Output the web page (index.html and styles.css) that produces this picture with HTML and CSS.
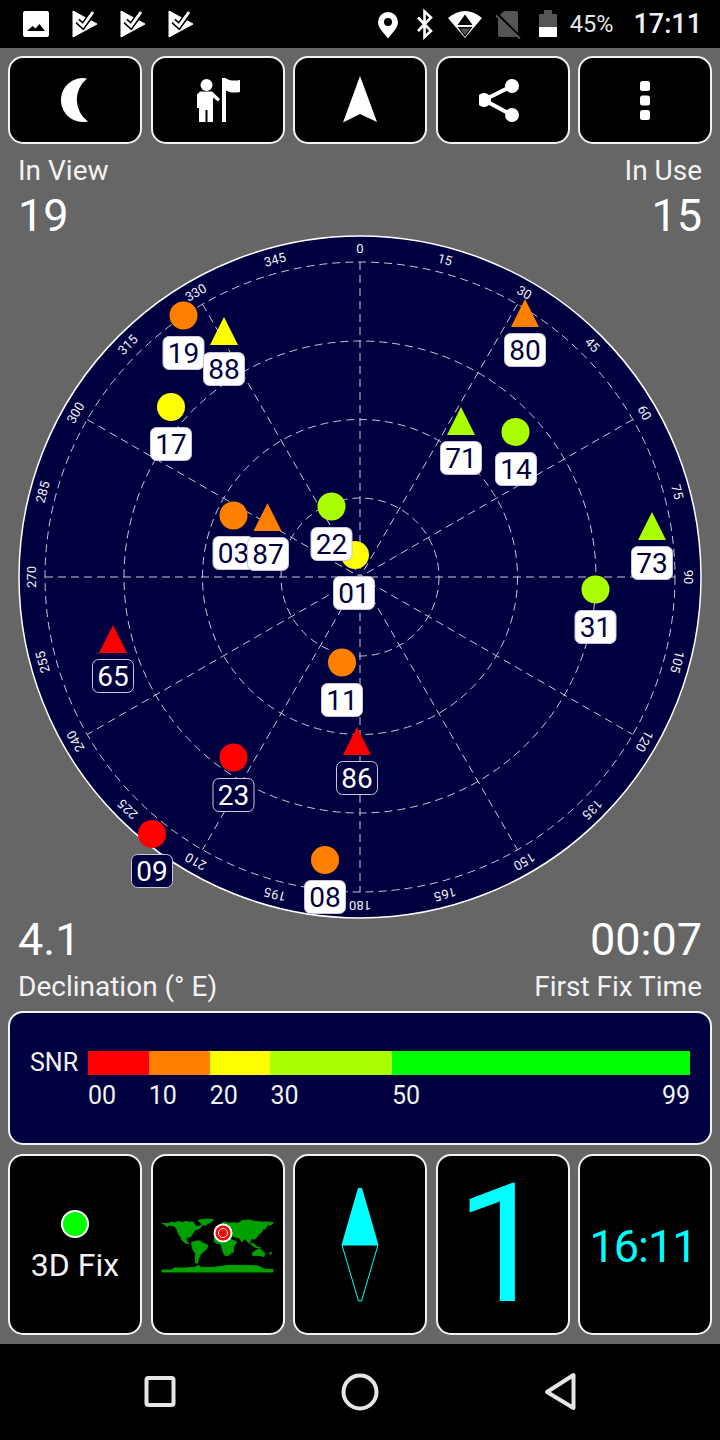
FILE: index.html
```html
<!DOCTYPE html>
<html lang="en">
<head>
  <meta charset="UTF-8">
  <title>GPS Test</title>
  <meta name="viewport" content="width=device-width, initial-scale=1.0">
  <link rel="stylesheet" href="styles.css">
</head>
<body>

<!-- STATUS BAR -->
<div class="status-bar">
  <svg class="status-left" viewBox="0 0 200 48">
    <path class="white" fill-rule="evenodd" d="M25 11h22a2 2 0 0 1 2 2v22a2 2 0 0 1-2 2H25a2 2 0 0 1-2-2V13a2 2 0 0 1 2-2zM27 31h18l-5.500-7-4 4.500-3-2.500z"/>
    <g id="check-flag">
      <path class="white" d="M73 11l24 13-24 13z" stroke="#fff" stroke-width="1" stroke-linejoin="round"/>
      <polyline class="check-clear" points="92.500,7 94,11 84,9"/>
      <polyline class="check-back" points="77.500,21 83,26 92.500,13"/>
      <polyline class="check-front" points="77.500,21 83,26 93,12"/>
    </g>
    <use href="#check-flag" x="48"/>
    <use href="#check-flag" x="96"/>
  </svg>
  <svg class="status-right" viewBox="379 0 180 48">
    <path class="white" fill-rule="evenodd" d="M389 12a10 10 0 0 1 10 10c0 6.500-7 12-10 16.500-3-4.500-10-10-10-16.500a10 10 0 0 1 10-10zM389 18a4 4 0 1 0 0 8 4 4 0 0 0 0-8z"/>
    <polyline class="bt" points="419,17.500 432,31 425.500,37 425.500,11.500 432,17.500 419,31"/>
    <path class="white" d="M449 18Q466 4 483 18L466 38z"/>
    <path class="black" d="M466 14.500l7.500 10.500h-15z"/>
    <path class="black" d="M458.500 27h15L466 37z"/>
    <path class="grey" d="M461 28.500h10L466 35z"/>
    <path class="grey" d="M505 11h12a2 2 0 0 1 2 2v22a2 2 0 0 1-2 2h-16a2 2 0 0 1-2-2V17z"/>
    <path class="sim-cut" d="M497 13l25 25"/>
    <path class="sim-line" d="M497 15.500l24 23"/>
    <path class="grey" d="M545 10h8v4h5v13h-18V14h5z"/>
    <path class="white" d="M540 27h18v10h-18z"/>
  </svg>
  <span class="battery-pct">45%</span>
  <span class="clock">17:11</span>
</div>

<!-- TOOLBAR -->
<div class="tile-row toolbar">
  <div class="tile">
    <svg class="tool-icon" viewBox="51 76 48 48"><path class="white" d="M87 78.500A22 22 0 1 0 88 121.500 27 27 0 0 1 87 78.500z"/></svg>
  </div>
  <div class="tile">
    <svg class="tool-icon" viewBox="194 76 48 48">
      <circle class="white" cx="206.500" cy="85" r="6"/>
      <path class="white" d="M200 91.500h12l8 7.500-2 2.500-5-4V122h-5.500v-12h-2v12H199v-14h-2V94.500z"/>
      <path class="white" d="M222 78h4v44h-4z"/>
      <path class="white" d="M226 78.500c5 2.500 9 2.500 14 1.500v12c-5 1-9 1-14-1.500z"/>
    </svg>
  </div>
  <div class="tile">
    <svg class="tool-icon" viewBox="336 76 48 48"><path class="white" d="M360 76l17 46-17-8-17 8.500z"/></svg>
  </div>
  <div class="tile">
    <svg class="tool-icon" viewBox="479 76 48 48">
      <polyline class="share-line" points="512,86 484,100 512,115"/>
      <circle class="white" cx="512" cy="86" r="7"/>
      <circle class="white" cx="484" cy="100" r="7"/>
      <circle class="white" cx="512" cy="115" r="7"/>
    </svg>
  </div>
  <div class="tile">
    <svg class="tool-icon" viewBox="621 76 48 48">
      <rect class="white" x="640" y="81" width="10" height="10" rx="2.500"/>
      <rect class="white" x="640" y="95.500" width="10" height="10" rx="2.500"/>
      <rect class="white" x="640" y="110" width="10" height="10" rx="2.500"/>
    </svg>
  </div>
</div>

<!-- COUNTS -->
<div class="stats stats-top">
  <div class="stat">
    <div class="stat-label">In View</div>
    <div class="stat-value">19</div>
  </div>
  <div class="stat stat-right">
    <div class="stat-label">In Use</div>
    <div class="stat-value">15</div>
  </div>
</div>

<!-- SKY PLOT -->
<svg class="sky" viewBox="18 235 684 684">
  <circle class="sky-disc" cx="360" cy="577" r="341"/>
  <g class="grid">
    <circle cx="360" cy="577" r="79"/>
    <circle cx="360" cy="577" r="157.500"/>
    <circle cx="360" cy="577" r="236"/>
    <circle cx="360" cy="577" r="315"/>
    <line x1="360" y1="262" x2="360" y2="892"/>
    <line x1="45" y1="577" x2="675" y2="577"/>
    <line x1="202.500" y1="304.200" x2="517.500" y2="849.800"/>
    <line x1="517.500" y1="304.200" x2="202.500" y2="849.800"/>
    <line x1="87.200" y1="419.500" x2="632.800" y2="734.500"/>
    <line x1="632.800" y1="419.500" x2="87.200" y2="734.500"/>
  </g>
  <g class="deg">
    <text x="360" y="253" transform="rotate(0 360 577)">0</text>
    <text x="360" y="253" transform="rotate(15 360 577)">15</text>
    <text x="360" y="253" transform="rotate(30 360 577)">30</text>
    <text x="360" y="253" transform="rotate(45 360 577)">45</text>
    <text x="360" y="253" transform="rotate(60 360 577)">60</text>
    <text x="360" y="253" transform="rotate(75 360 577)">75</text>
    <text x="360" y="253" transform="rotate(90 360 577)">90</text>
    <text x="360" y="253" transform="rotate(105 360 577)">105</text>
    <text x="360" y="253" transform="rotate(120 360 577)">120</text>
    <text x="360" y="253" transform="rotate(135 360 577)">135</text>
    <text x="360" y="253" transform="rotate(150 360 577)">150</text>
    <text x="360" y="253" transform="rotate(165 360 577)">165</text>
    <text x="360" y="253" transform="rotate(180 360 577)">180</text>
    <text x="360" y="253" transform="rotate(195 360 577)">195</text>
    <text x="360" y="253" transform="rotate(210 360 577)">210</text>
    <text x="360" y="253" transform="rotate(225 360 577)">225</text>
    <text x="360" y="253" transform="rotate(240 360 577)">240</text>
    <text x="360" y="253" transform="rotate(255 360 577)">255</text>
    <text x="360" y="253" transform="rotate(270 360 577)">270</text>
    <text x="360" y="253" transform="rotate(285 360 577)">285</text>
    <text x="360" y="253" transform="rotate(300 360 577)">300</text>
    <text x="360" y="253" transform="rotate(315 360 577)">315</text>
    <text x="360" y="253" transform="rotate(330 360 577)">330</text>
    <text x="360" y="253" transform="rotate(345 360 577)">345</text>
  </g>

  <!-- satellites, x/y of the marker and its number badge -->
  <circle class="snr20" cx="355" cy="555" r="14"/>

  <circle class="snr10" cx="183.500" cy="315.500" r="14"/>
  <g class="sat" transform="translate(183.500 336)"><rect x="-20.500" y="0.500" width="41" height="33" rx="6"/><text y="26.500">19</text></g>
  <path class="snr20" d="M224 317l14 28h-28z"/>
  <g class="sat" transform="translate(224 352)"><rect x="-20.500" y="0.500" width="41" height="33" rx="6"/><text y="26.500">88</text></g>

  <circle class="snr20" cx="171" cy="407" r="14"/>
  <g class="sat" transform="translate(171 427)"><rect x="-20.500" y="0.500" width="41" height="33" rx="6"/><text y="26.500">17</text></g>

  <circle class="snr10" cx="233.500" cy="515.500" r="14"/>
  <g class="sat" transform="translate(233.500 536)"><rect x="-20.500" y="0.500" width="41" height="33" rx="6"/><text y="26.500">03</text></g>
  <path class="snr10" d="M267.500 503l14 28h-28z"/>
  <g class="sat" transform="translate(268 537)"><rect x="-20.500" y="0.500" width="41" height="33" rx="6"/><text y="26.500">87</text></g>

  <circle class="snr30" cx="331.500" cy="506.500" r="14"/>
  <g class="sat" transform="translate(331.500 527)"><rect x="-20.500" y="0.500" width="41" height="33" rx="6"/><text y="26.500">22</text></g>
  <g class="sat" transform="translate(354 576)"><rect x="-20.500" y="0.500" width="41" height="33" rx="6"/><text y="26.500">01</text></g>

  <path class="snr10" d="M525 299l14 28h-28z"/>
  <g class="sat" transform="translate(525 333)"><rect x="-20.500" y="0.500" width="41" height="33" rx="6"/><text y="26.500">80</text></g>

  <path class="snr30" d="M461 407l14 28h-28z"/>
  <g class="sat" transform="translate(461 441)"><rect x="-20.500" y="0.500" width="41" height="33" rx="6"/><text y="26.500">71</text></g>

  <circle class="snr30" cx="515.500" cy="432" r="14"/>
  <g class="sat" transform="translate(516 452)"><rect x="-20.500" y="0.500" width="41" height="33" rx="6"/><text y="26.500">14</text></g>

  <path class="snr30" d="M652 512l14 28h-28z"/>
  <g class="sat" transform="translate(652 546)"><rect x="-20.500" y="0.500" width="41" height="33" rx="6"/><text y="26.500">73</text></g>

  <circle class="snr30" cx="595.500" cy="589.500" r="14"/>
  <g class="sat" transform="translate(595.500 610)"><rect x="-20.500" y="0.500" width="41" height="33" rx="6"/><text y="26.500">31</text></g>

  <path class="snr00" d="M113 625l14 28h-28z"/>
  <g class="sat idle" transform="translate(113 659)"><rect x="-20.500" y="0.500" width="41" height="33" rx="6"/><text y="26.500">65</text></g>

  <circle class="snr10" cx="342" cy="662.500" r="14"/>
  <g class="sat" transform="translate(342 683)"><rect x="-20.500" y="0.500" width="41" height="33" rx="6"/><text y="26.500">11</text></g>

  <path class="snr00" d="M357 727l14 28h-28z"/>
  <g class="sat idle" transform="translate(357 761)"><rect x="-20.500" y="0.500" width="41" height="33" rx="6"/><text y="26.500">86</text></g>

  <circle class="snr00" cx="233.500" cy="757.500" r="14"/>
  <g class="sat idle" transform="translate(233.500 778)"><rect x="-20.500" y="0.500" width="41" height="33" rx="6"/><text y="26.500">23</text></g>

  <circle class="snr00" cx="152" cy="834" r="14"/>
  <g class="sat idle" transform="translate(152 854)"><rect x="-20.500" y="0.500" width="41" height="33" rx="6"/><text y="26.500">09</text></g>

  <circle class="snr10" cx="325" cy="860" r="14"/>
  <g class="sat" transform="translate(325 880)"><rect x="-20.500" y="0.500" width="41" height="33" rx="6"/><text y="26.500">08</text></g>
</svg>

<!-- DECLINATION / FIRST FIX -->
<div class="stats stats-bottom">
  <div class="stat">
    <div class="stat-value">4.1</div>
    <div class="stat-label">Declination (° E)</div>
  </div>
  <div class="stat stat-right">
    <div class="stat-value">00:07</div>
    <div class="stat-label">First Fix Time</div>
  </div>
</div>

<!-- SNR LEGEND -->
<div class="snr-panel">
  <div class="snr-title">SNR</div>
  <div class="snr-scale">
    <div class="snr-bar">
      <div class="seg seg-00"></div>
      <div class="seg seg-10"></div>
      <div class="seg seg-20"></div>
      <div class="seg seg-30"></div>
      <div class="seg seg-50"></div>
    </div>
    <div class="snr-bar snr-ticks">
      <div class="seg seg-00">00</div>
      <div class="seg seg-10">10</div>
      <div class="seg seg-20">20</div>
      <div class="seg seg-30">30</div>
      <div class="seg seg-50 last-tick"><span>50</span><span>99</span></div>
    </div>
  </div>
</div>

<!-- BOTTOM TILES -->
<div class="tile-row info-row">
  <div class="tile fix-tile">
    <div class="fix-dot"></div>
    <div class="fix-text">3D Fix</div>
  </div>
  <div class="tile">
    <svg class="world" viewBox="0 0 360 198">
      <g class="land">
        <path d="M12 34L30 35 38 31 52 33 60 28 72 32 84 28 94 31 104 29 110 37 116 44 124 42 132 40 126 48 118 52 112 54 106 60 102 68 98 74 90 76 84 82 86 90 92 94 84 94 78 90 72 84 68 74 62 66 58 54 52 46 44 40 32 40 26 44 22 38z"/>
        <path d="M120 26L134 22 150 21 166 23 160 30 150 34 142 40 132 38 128 32z"/>
        <path d="M100 92L112 88 122 86 134 92 146 98 150 102 144 112 136 120 128 126 122 140 118 154 112 152 112 136 112 124 104 110z"/>
        <path d="M170 78L180 68 196 68 206 74 214 78 224 84 236 90 230 100 224 110 220 122 212 130 200 130 194 116 190 100 186 94 174 94 168 88z"/>
        <path d="M222 112L226 108 226 120 222 124z"/>
        <path d="M176 60L180 48 186 38 198 30 214 34 226 32 240 34 252 26 272 24 290 28 310 30 330 30 346 32 340 38 328 40 322 50 314 52 310 62 302 66 296 76 288 82 282 78 278 86 272 94 264 82 258 80 252 90 244 78 234 76 224 72 210 68 196 64 186 62z"/>
        <path d="M276 94L288 96 296 104 308 108 300 108 288 104z"/>
        <path d="M284 122L296 114 306 112 312 116 320 124 318 134 306 130 292 130 284 130z"/>
        <path d="M334 124L340 120 338 128z"/>
        <path d="M12 174L40 174 50 168 80 168 110 166 122 160 128 166 170 166 212 160 260 160 300 162 320 172 345 172 345 180 12 180z"/>
      </g>
    </svg>
    <svg class="world-pin" viewBox="0 0 20 20">
      <circle class="white" cx="10" cy="10" r="9.500"/>
      <circle class="pin-red" cx="10" cy="10" r="7.500"/>
      <circle class="pin-ring" cx="10" cy="10" r="4.500"/>
    </svg>
  </div>
  <div class="tile">
    <svg class="compass" viewBox="340 1186 40 118">
      <path class="cyan" d="M358 1188h4l16.500 57h-37z"/>
      <path class="compass-tail" d="M342 1245h36l-16.500 56h-3z"/>
    </svg>
  </div>
  <div class="tile big-digit">1</div>
  <div class="tile utc-time">16:11</div>
</div>

<!-- NAV BAR -->
<div class="nav-bar">
  <svg class="nav-icons" viewBox="140 1370 440 44">
    <rect class="nav-line" x="146.500" y="1378" width="27" height="27" rx="2"/>
    <circle class="nav-line" cx="360" cy="1392" r="16.500"/>
    <path class="nav-line" d="M547 1392L573.500 1375V1408z"/>
  </svg>
</div>

</body>
</html>
```

FILE: styles.css
```css
* { margin: 0; padding: 0; box-sizing: border-box; }

body {
  width: 720px;
  height: 1440px;
  overflow: hidden;
  background-color: #666666;
  color: white;
  font-family: Roboto, sans-serif;
}

svg { display: block; }

.white { fill: white; }
.black { fill: black; }
.grey { fill: #555555; }
.cyan { fill: #00ffff; }

/* status bar */
.status-bar {
  display: flex;
  align-items: center;
  height: 48px;
  padding-right: 18px;
  background-color: black;
}
.status-left { width: 200px; height: 48px; }
.status-right { width: 180px; height: 48px; margin-left: auto; }
.check-clear { fill: black; }
.check-back { fill: none; stroke: black; stroke-width: 6; }
.check-front { fill: none; stroke: white; stroke-width: 3; }
.bt { fill: none; stroke: white; stroke-width: 2.6; }
.sim-cut { fill: none; stroke: black; stroke-width: 3; }
.sim-line { fill: none; stroke: #555555; stroke-width: 2; }
.battery-pct { margin-left: 12px; font-size: 23.500px; color: #e6e6e6; }
.clock { margin-left: 20px; font-size: 27px; font-weight: 500; color: #f0f0f0; }

/* tiles */
.tile-row {
  display: grid;
  grid-template-columns: repeat(5, 1fr);
  gap: 8.5px;
  padding: 0 8px;
}
.tile {
  position: relative;
  display: flex;
  align-items: center;
  justify-content: center;
  background-color: black;
  border: 2px solid #f2f2f2;
  border-radius: 15px;
}
.toolbar { margin-top: 8px; height: 88px; }
.tool-icon { width: 48px; height: 48px; }
.share-line { fill: none; stroke: white; stroke-width: 4; }

/* counts above and below the plot */
.stats {
  display: flex;
  justify-content: space-between;
  padding: 0 18px;
}
.stats-top { height: 91px; padding-top: 10px; }
.stats-bottom { height: 92px; }
.stat-right { text-align: right; }
.stat-label { font-size: 28px; line-height: 34px; color: #f2f2f2; }
.stat-value { font-size: 45px; line-height: 54px; }
.stats-bottom .stat-label { margin-top: 3px; }
.stats-bottom .stat-value { margin-top: -6px; }
.stats-top .stat-value { margin-top: 1px; }

/* sky plot */
.sky { width: 684px; height: 684px; margin: 0 auto; }
.sky-disc { fill: #000040; stroke: white; stroke-width: 1.5; }
.grid circle, .grid line {
  fill: none;
  stroke: #c8c8d8;
  stroke-width: 1;
  stroke-dasharray: 8 5;
}
.deg text {
  fill: #f0f0f0;
  font-size: 13px;
  text-anchor: middle;
}
.snr00 { fill: #ff0000; }
.snr10 { fill: #ff8000; }
.snr20 { fill: #ffff00; }
.snr30 { fill: #aaff00; }
.sat rect { fill: white; stroke: #c8c8d8; stroke-width: 1; }
.sat text {
  fill: #000040;
  font-size: 28px;
  text-anchor: middle;
}
.sat.idle rect { fill: #000040; }
.sat.idle text { fill: white; }

/* snr legend */
.snr-panel {
  display: flex;
  height: 134px;
  margin: 0 8px;
  padding: 38px 20px 0;
  background-color: #000040;
  border: 2px solid #f2f2f2;
  border-radius: 15px;
}
.snr-title { width: 58px; font-size: 25px; line-height: 24px; color: #f2f2f2; }
.snr-scale { flex: 1; }
.snr-bar { display: flex; height: 24px; }
.snr-ticks { margin-top: 9px; font-size: 25px; line-height: 24px; color: #f2f2f2; }
.seg-00, .seg-10, .seg-20 { flex: 10; }
.seg-30 { flex: 20; }
.seg-50 { flex: 49; }
.snr-bar:first-child .seg-00 { background-color: #ff0000; }
.snr-bar:first-child .seg-10 { background-color: #ff8000; }
.snr-bar:first-child .seg-20 { background-color: #ffff00; }
.snr-bar:first-child .seg-30 { background-color: #aaff00; }
.snr-bar:first-child .seg-50 { background-color: #00ff00; }
.last-tick { display: flex; justify-content: space-between; }

/* bottom row */
.info-row { margin-top: 9px; height: 181px; }
.fix-tile { flex-direction: column; padding-top: 6px; }
.fix-dot {
  width: 28px;
  height: 28px;
  background-color: #00ff00;
  border: 2px solid white;
  border-radius: 50%;
}
.fix-text { margin-top: 6px; font-size: 32px; line-height: 42px; color: #f2f2f2; }
.world { width: 120px; height: 66px; }
.land path { fill: #00a000; stroke: #00a000; stroke-width: 3; }
.world-pin {
  position: absolute;
  top: 67px;
  left: 60px;
  width: 20px;
  height: 20px;
}
.pin-red { fill: #ff0000; }
.pin-ring { fill: none; stroke: white; stroke-width: 1; }
.compass { width: 40px; height: 118px; }
.compass-tail { fill: none; stroke: #00ffff; stroke-width: 1; }
.big-digit { font-size: 166px; line-height: 1; color: #00ffff; }
.utc-time { padding: 4px 4px 0 0; font-size: 45px; letter-spacing: -1px; color: #00ffff; }

/* nav bar */
.nav-bar {
  display: flex;
  align-items: center;
  justify-content: center;
  height: 96px;
  margin-top: 9px;
  background-color: black;
}
.nav-icons { width: 440px; height: 44px; }
.nav-line {
  fill: none;
  stroke: #e6e6e6;
  stroke-width: 4;
  stroke-linejoin: round;
}
```
